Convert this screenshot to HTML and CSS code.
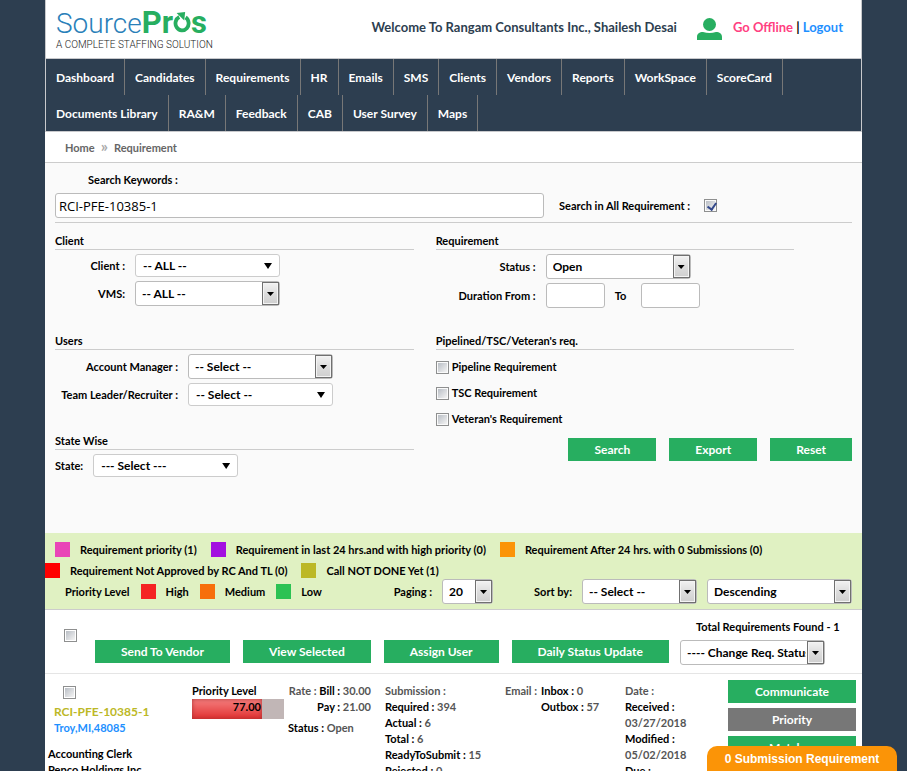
FILE: index.html
```html
<!DOCTYPE html>
<html lang="en">
<head>
<meta charset="utf-8">
<title>SourcePros - Requirement</title>
<link rel="stylesheet" href="styles.css">
</head>
<body>
<div class="page">
  <header class="header">
    <a class="logo" href="#">
      <span class="logo-name"><span class="logo-source">Source</span><span class="logo-pros">Pr<svg class="logo-o" viewBox="0 0 20 25" aria-label="o"><path d="M14 8.500A7.300 7.800 0 1 1 7 8" fill="none" stroke="#27ae60" stroke-width="4.200"/><path d="M4 3.500L13.500 2.500L12.500 12Z" fill="#27ae60"/></svg>s</span></span>
      <span class="logo-tag">A COMPLETE STAFFING SOLUTION</span>
    </a>
    <div class="account">
      <span class="welcome">Welcome To Rangam Consultants Inc., Shailesh Desai</span>
      <svg class="avatar" viewBox="0 0 25 22" aria-hidden="true"><circle cx="12.5" cy="6.5" r="6.5"/><path d="M0 22V19C0 15.500 2.500 14 6 14Q12.500 16 19 14C22.500 14 25 15.500 25 19V22Z"/></svg>
      <span><a class="offline" href="#">Go Offline</a> | <a class="link" href="#">Logout</a></span>
    </div>
  </header>
  <nav class="nav">
    <a href="#">Dashboard</a><a href="#">Candidates</a><a href="#">Requirements</a><a href="#">HR</a><a href="#">Emails</a><a href="#">SMS</a><a href="#">Clients</a><a href="#">Vendors</a><a href="#">Reports</a><a href="#">WorkSpace</a><a href="#">ScoreCard</a><a href="#">Documents Library</a><a href="#">RA&amp;M</a><a href="#">Feedback</a><a href="#">CAB</a><a href="#">User Survey</a><a href="#">Maps</a>
  </nav>
  <div class="crumbs"><a href="#">Home</a><span class="sep">»</span><span>Requirement</span></div>

  <form class="search" onsubmit="return false">
    <div class="keywords">
      <label class="keywords-label" for="kw">Search Keywords :</label>
      <div class="keywords-row">
        <input class="box keywords-input" id="kw" type="text" value="RCI-PFE-10385-1">
        <label class="all-label" for="all">Search in All Requirement :</label>
        <input class="tick" id="all" type="checkbox" checked>
      </div>
    </div>
    <div class="sections">
      <section class="section">
        <h2>Client</h2>
        <div class="field narrow"><label for="client">Client :</label><span class="pick flat"><select id="client"><option>-- ALL --</option></select></span></div>
        <div class="field narrow"><label for="vms">VMS:</label><span class="pick"><select id="vms"><option>-- ALL --</option></select></span></div>
      </section>
      <section class="section">
        <h2>Requirement</h2>
        <div class="field mid"><label for="status">Status :</label><span class="pick"><select id="status"><option>Open</option></select></span></div>
        <div class="field mid"><label for="from">Duration From :</label><input class="box date" id="from" type="text"><label class="to" for="to">To</label><input class="box date" id="to" type="text"></div>
      </section>
      <section class="section">
        <h2>Users</h2>
        <div class="field wide"><label for="am">Account Manager :</label><span class="pick"><select id="am"><option>-- Select --</option></select></span></div>
        <div class="field wide"><label for="tl">Team Leader/Recruiter :</label><span class="pick flat"><select id="tl"><option>-- Select --</option></select></span></div>
      </section>
      <section class="section">
        <h2>Pipelined/TSC/Veteran's req.</h2>
        <label class="check"><input class="tick" type="checkbox">Pipeline Requirement</label>
        <label class="check"><input class="tick" type="checkbox">TSC Requirement</label>
        <label class="check"><input class="tick" type="checkbox">Veteran's Requirement</label>
      </section>
      <section class="section">
        <h2>State Wise</h2>
        <div class="field"><label for="state">State:</label><span class="pick flat"><select id="state"><option>--- Select ---</option></select></span></div>
      </section>
      <div class="actions">
        <button class="btn">Search</button>
        <button class="btn">Export</button>
        <button class="btn">Reset</button>
      </div>
    </div>
  </form>

  <div class="legend">
    <div class="legend-row first"><i class="sw pink"></i>Requirement priority (1)<i class="sw purple"></i>Requirement in last 24 hrs.and with high priority (0)<i class="sw amber"></i>Requirement After 24 hrs. with 0 Submissions (0)</div>
    <div class="legend-row"><i class="sw pure-red"></i>Requirement Not Approved by RC And TL (0)<i class="sw olive"></i>Call NOT DONE Yet (1)</div>
    <div class="legend-row levels"><span>Priority Level</span><i class="sw red"></i>High<i class="sw orange"></i>Medium<i class="sw green"></i>Low
      <div class="sorting">
        <label for="paging">Paging :</label><span class="pick small"><select id="paging"><option>20</option></select></span>
        <label class="sort-label" for="sort">Sort by:</label><span class="pick medium"><select id="sort"><option>-- Select --</option></select></span>
        <span class="pick"><select aria-label="Sort order"><option>Descending</option></select></span>
      </div>
    </div>
  </div>

  <div class="toolbar">
    <input class="tick" type="checkbox" aria-label="Select all">
    <div class="toolbar-buttons">
      <button class="btn">Send To Vendor</button>
      <button class="btn">View Selected</button>
      <button class="btn">Assign User</button>
      <button class="btn">Daily Status Update</button>
    </div>
    <div class="toolbar-right">
      <span class="total">Total Requirements Found - 1</span>
      <span class="pick"><select aria-label="Change status"><option>---- Change Req. Status ----</option></select></span>
    </div>
  </div>

  <article class="result">
    <div class="job">
      <div class="job-head">
        <input class="tick" type="checkbox" aria-label="Select requirement">
        <a class="job-id" href="#">RCI-PFE-10385-1</a>
        <a class="link" href="#">Troy,MI,48085</a>
      </div>
      <div>Accounting Clerk</div>
      <div>Pepco Holdings Inc.</div>
    </div>
    <div class="priority">
      <div>Priority Level</div>
      <div class="meter"><div class="meter-fill" style="width:76%">77.00</div></div>
    </div>
    <div class="rate">
      <div class="rates"><div><em>Rate : </em>Bill : <em>30.00</em></div><div>Pay : <em>21.00</em></div></div>
      <div class="status">Status : <em>Open</em></div>
    </div>
    <div>
      <div><em>Submission :</em></div>
      <div>Required : <em>394</em></div>
      <div>Actual : <em>6</em></div>
      <div>Total : <em>6</em></div>
      <div>ReadyToSubmit : <em>15</em></div>
      <div>Rejected : <em>0</em></div>
    </div>
    <div class="email">
      <em>Email :</em>
      <div><div>Inbox : <em>0</em></div><div>Outbox : <em>57</em></div></div>
    </div>
    <div>
      <div><em>Date :</em></div>
      <div>Received :</div>
      <div><em>03/27/2018</em></div>
      <div>Modified :</div>
      <div><em>05/02/2018</em></div>
      <div>Due :</div>
    </div>
    <div class="side">
      <button class="btn">Communicate</button>
      <button class="btn gray">Priority</button>
      <button class="btn">Matches</button>
    </div>
  </article>
</div>
<button class="toast">0 Submission Requirement</button>
</body>
</html>
```
FILE: styles.css
```css
* { box-sizing: border-box; }
html { scrollbar-width: none; }
body {
  margin: 0;
  background: #2d3e50;
  color: #000;
  font: bold 11px/16px Lato, "Open Sans", sans-serif;
}
a { color: inherit; text-decoration: none; }
em { font-style: normal; color: #555; }
button, input, select { font: inherit; margin: 0; }
.link { color: #1e90ff; }
.page { margin: 0 45px; background: #fff; }

.header {
  display: flex;
  justify-content: space-between;
  height: 59px;
  padding: 0 18px 0 10px;
  border: solid #c8c9cc;
  border-width: 0 1px 1px;
}
.logo { display: flex; flex-direction: column; padding-top: 8px; font-family: Roboto, sans-serif; }
.logo-name { display: flex; align-items: baseline; height: 30px; line-height: 30px; }
.logo-source { color: #2980b9; font-weight: 300; font-size: 28px; }
.logo-pros { color: #27ae60; font-weight: 700; font-size: 31px; }
.logo-o { width: 18px; height: 24px; }
.logo-tag { color: #222; font-size: 10px; font-weight: 300; line-height: 13px; }
.account { display: flex; align-items: center; font-size: 13px; padding-bottom: 4px; }
.welcome { color: #2d3e50; }
.avatar { width: 25px; height: 22px; margin: 4px 11px 0 20px; fill: #27ae60; }
.offline { color: #ff4081; }

.nav {
  display: flex;
  flex-wrap: wrap;
  background: #2d3e50;
  border: solid #c8c9cc;
  border-width: 0 1px 1px;
  color: #fff;
  font-size: 12px;
}
.nav a { height: 36px; padding: 0 10px; line-height: 38px; border-right: 1px solid #777; }
.crumbs {
  display: flex;
  gap: 6px;
  padding: 0 20px;
  line-height: 31px;
  height: 31px;
  color: #666;
  border-bottom: 1px solid #ccc;
}
.sep { color: #aaa; font-size: 16px; line-height: 28px; }

.search { padding: 9px 10px 0; min-height: 370px; background: #fafafa; }
.keywords { border-bottom: 1px solid #ccc; padding-bottom: 4px; }
.keywords-label { display: block; padding-left: 33px; margin-bottom: 5px; }
.keywords-row { display: flex; align-items: center; }
.box { height: 25px; border: 1px solid #bbb; border-radius: 3px; background: #fff; padding: 0 3px; min-width: 0; }
.keywords-input { width: 489px; font: 13px "Open Sans", sans-serif; }
.all-label { margin: 0 14px 0 15px; }
.tick {
  appearance: none;
  flex: none;
  width: 13px;
  height: 13px;
  border: 1px solid #8e8f8f;
  background: linear-gradient(135deg, #b9bec5, #f4f4f4) content-box #f4f4f4;
  padding: 1px;
  position: relative;
}
.tick:checked::after {
  content: "";
  position: absolute;
  left: 4px;
  top: 1px;
  width: 4px;
  height: 7px;
  border: solid #34498b;
  border-width: 0 2px 2px 0;
  transform: rotate(35deg);
}
.sections { display: grid; grid-template-columns: 45% 1fr; grid-auto-rows: 100px; column-gap: 22px; padding-top: 10px; }
.section h2 { margin: 0 0 4px; font-size: 11px; line-height: 16px; border-bottom: 1px solid #ccc; }
.section:nth-child(even) { width: 86%; }
.field { display: flex; align-items: center; gap: 10px; margin-bottom: 4px; }
.field label { text-align: right; white-space: nowrap; }
.narrow label:first-child { width: 70px; }
.mid label:first-child { width: 100px; }
.wide label:first-child { width: 123px; }
.date { width: 59px; }
.field .to { margin-right: 5px; }
.check { display: flex; align-items: center; gap: 3px; height: 26px; }
.actions { display: flex; justify-content: flex-end; gap: 13px; padding-top: 5px; }

.pick { position: relative; display: block; width: 145px; height: 25px; flex: none; font-size: 12px; }
.pick select {
  appearance: none;
  width: 100%;
  height: 100%;
  border: 1px solid #bbb;
  border-radius: 3px;
  background: #fff;
  color: #000;
  padding: 0 18px 0 6px;
}
.pick::before {
  content: "";
  box-sizing: border-box;
  position: absolute;
  top: 1px;
  right: 1px;
  width: 17px;
  height: 23px;
  border: 1px solid #707070;
  background: linear-gradient(#f2f2f2, #ddd 50%, #cfcfcf);
  box-shadow: inset 0 0 0 1px #f4f4f4;
  pointer-events: none;
}
.pick::after {
  content: "";
  position: absolute;
  top: 11px;
  right: 6px;
  width: 7px;
  height: 4px;
  background: #000;
  clip-path: polygon(0 0, 100% 0, 50% 100%);
  pointer-events: none;
}
.flat { height: 23px; }
.flat select { border-color: #ccc; padding-left: 7px; }
.flat::before { display: none; }
.flat::after { top: 9px; right: 8px; width: 8px; height: 6px; }
.small { width: 51px; }
.medium { width: 115px; }

.btn {
  height: 23px;
  border: 0;
  padding: 0 26px;
  background: #27ae60;
  color: #fff;
  font-size: 12px;
  line-height: 23px;
  white-space: nowrap;
}
.gray { background: #777; }

.legend { background: #e0f1c2; border-bottom: 1px solid #ccc; padding: 6px 10px 7px 0; }
.legend-row { display: flex; align-items: center; height: 21px; }
.first { padding-left: 10px; }
.levels { padding-left: 20px; }
.sw { width: 15px; height: 15px; margin: 0 10px 0 14px; flex: none; }
.levels .sw { margin-left: 11px; }
.sw:first-child { margin-left: 0; }
.pink { background: #e945b7; }
.purple { background: #a30fe0; }
.amber { background: #fb9407; }
.pure-red { background: #f00; }
.olive { background: #bcb826; }
.red { background: #f52323; }
.orange { background: #f76f0b; }
.green { background: #2cc253; }
.sorting { display: flex; align-items: center; gap: 10px; margin-left: auto; }
.sort-label { margin-left: 31px; }

.toolbar { display: flex; height: 64px; padding: 0 37px 0 19px; border-bottom: 1px solid #e5e5e5; }
.toolbar .tick { margin: 19px 18px 0 0; }
.toolbar-buttons { display: flex; gap: 13px; padding-top: 30px; }
.toolbar-right { margin-left: auto; width: 145px; display: flex; flex-direction: column; align-items: flex-start; padding-top: 9px; gap: 5px; }
.total { white-space: nowrap; padding-left: 16px; }

.result { display: grid; grid-template-columns: 144px 96px 97px 120px 120px 103px 1fr; padding: 9px 6px 20px 3px; min-height: 140px; }
.job-head { display: flex; flex-direction: column; padding-left: 6px; margin-bottom: 10px; }
.job-head .tick { margin: 3px 0 4px 9px; }
.job-id { color: #bcb826; font-size: 12px; line-height: 17px; }
.meter { width: 92px; height: 20px; background: #c1b6b6; }
.meter-fill { height: 100%; padding-right: 1px; text-align: right; background: linear-gradient(#f58080, #e03030); box-shadow: inset 0 0 4px #a33; }
.rates { width: 83px; text-align: right; white-space: nowrap; }
.status { margin-top: 5px; }
.email { display: flex; gap: 4px; }
.side { display: flex; flex-direction: column; gap: 5px; margin-top: -3px; }

.toast {
  position: fixed;
  right: 10px;
  bottom: 0;
  width: 190px;
  height: 25px;
  border: 0;
  border-radius: 10px 10px 0 0;
  background: #fb9407;
  color: #fff;
  font: bold 12px "Liberation Sans", sans-serif;
}
```
